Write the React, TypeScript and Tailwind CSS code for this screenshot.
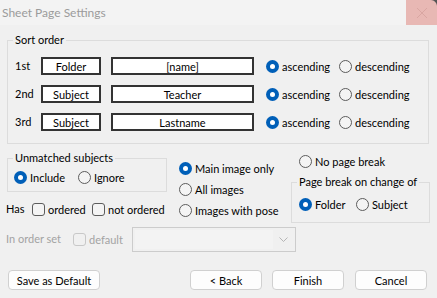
import React from "react";

const font = "font-['Lato','Liberation_Sans',sans-serif]";

function Radio({ checked, label, w }: { checked?: boolean; label: string; w?: string }) {
  return (
    <div className={`flex items-center gap-[3px] ${w ?? ""}`}>
      {checked ? (
        <div className="w-[13px] h-[13px] rounded-full bg-[#005fb8] flex items-center justify-center shrink-0">
          <div className="w-[5px] h-[5px] rounded-full bg-white" />
        </div>
      ) : (
        <div className="w-[13px] h-[13px] rounded-full border border-[#5c5c5c] bg-[#f4f4f4] shrink-0" />
      )}
      <span className="leading-[13px]">{label}</span>
    </div>
  );
}

function Check({ label, disabled }: { label: string; disabled?: boolean }) {
  return (
    <div className={`flex items-center gap-[3px] ${disabled ? "text-[#a3a3a3]" : ""}`}>
      <div
        className={`w-[13px] h-[13px] rounded-[3px] border shrink-0 ${
          disabled ? "border-[#c8c8c8]" : "border-[#5c5c5c] bg-[#f4f4f4]"
        }`}
      />
      <span className="leading-[13px]">{label}</span>
    </div>
  );
}

function SortRow({ n, a, b }: { n: string; a: string; b: string }) {
  return (
    <div className="flex items-center h-[18px] pl-[7px]">
      <span className="w-[26px]">{n}</span>
      <div className="w-[60px] h-[18px] border-2 border-[#333] bg-white flex items-center justify-center leading-none">
        {a}
      </div>
      <div className="ml-[10px] w-[143px] h-[18px] border-2 border-[#333] bg-white flex items-center justify-center leading-none">
        {b}
      </div>
      <div className="ml-[12px] flex">
        <Radio checked label="ascending" w="w-[73px]" />
        <Radio label="descending" />
      </div>
    </div>
  );
}

function Btn({ children, w }: { children: React.ReactNode; w: string }) {
  return (
    <div
      className={`${w} h-[20px] rounded-[4px] border border-[#d0d0d0] bg-[#fdfdfd] flex items-center justify-center leading-none`}
    >
      {children}
    </div>
  );
}

export default function App() {
  return (
    <div className={`w-[437px] h-[298px] bg-[#f0f0f0] text-[11px] text-black flex flex-col overflow-hidden ${font}`}>
      {/* Title bar */}
      <div className="h-[25px] bg-[#f3f3f3] flex items-center shrink-0">
        <span className="flex-1 pl-[2px] text-[12px] text-[#9b9b9b] leading-none">Sheet Page Settings</span>
        <div className="w-[31px] h-[25px] bg-[#e8b8b4] flex items-center justify-center relative">
          <svg width="12" height="12" viewBox="0 0 12 12">
            <path d="M1 1L11 11M11 1L1 11" stroke="#d9a6a2" strokeWidth="1" />
          </svg>
          <svg className="absolute top-0 right-0" width="6" height="6" viewBox="0 0 6 6">
            <path d="M0 0H6V6C6 3 3 0 0 0Z" fill="#555" />
          </svg>
        </div>
      </div>

      {/* Sort order */}
      <fieldset className="ml-[7px] mt-[8px] w-[422px] border border-[#dcdcdc] px-0 pt-0 pb-[12px] m-0 shrink-0">
        <legend className="ml-[5px] px-[2px] leading-[14px]">Sort order</legend>
        <div className="flex flex-col gap-[10px] mt-[10px]">
          <SortRow n="1st" a="Folder" b="[name]" />
          <SortRow n="2nd" a="Subject" b="Teacher" />
          <SortRow n="3rd" a="Subject" b="Lastname" />
        </div>
      </fieldset>

      {/* Middle section */}
      <div className="flex shrink-0">
        {/* left col */}
        <div className="flex flex-col pl-[7px] w-[179px]">
          <fieldset className="mt-[7px] w-[160px] border border-[#dcdcdc] px-0 pt-0 pb-[7px] m-0">
            <legend className="ml-[5px] px-[2px] leading-[14px]">Unmatched subjects</legend>
            <div className="flex mt-[6px] pl-[6px]">
              <Radio checked label="Include" w="w-[64px]" />
              <Radio label="Ignore" />
            </div>
          </fieldset>
          <div className="flex items-center mt-[9px] h-[16px] -ml-[1px]">
            <span className="w-[26px]">Has</span>
            <div className="w-[60px]">
              <Check label="ordered" />
            </div>
            <Check label="not ordered" />
          </div>
        </div>
        {/* middle col */}
        <div className="flex flex-col w-[112px] pt-[14px]">
          <div className="h-[21px] flex items-center">
            <Radio checked label="Main image only" />
          </div>
          <div className="h-[21px] flex items-center">
            <Radio label="All images" />
          </div>
          <div className="h-[21px] flex items-center">
            <Radio label="Images with pose" />
          </div>
        </div>
        {/* right col */}
        <div className="flex flex-col">
          <div className="h-[14px] mt-[10px] flex items-center pl-[8px]">
            <Radio label="No page break" />
          </div>
          <fieldset className="mt-[7px] w-[139px] border border-[#dcdcdc] px-0 pt-0 pb-[11px] m-0">
            <legend className="ml-[5px] px-[2px] leading-[14px]">Page break on change of</legend>
            <div className="flex mt-[9px] pl-[7px]">
              <Radio checked label="Folder" w="w-[57px]" />
              <Radio label="Subject" />
            </div>
          </fieldset>
        </div>
      </div>

      {/* In order set */}
      <div className="flex items-center mt-[4px] h-[25px] pl-[6px] shrink-0">
        <span className="w-[67px] text-[#a3a3a3]">In order set</span>
        <div className="w-[59px]">
          <Check label="default" disabled />
        </div>
        <div className="w-[164px] h-[25px] border border-[#cccccc] bg-[#f0f0f0] flex items-center p-[2px]">
          <div className="flex-1 h-full bg-[#f3f3f3]" />
          <div className="w-[20px] flex items-center justify-center">
            <svg width="9" height="5" viewBox="0 0 9 5">
              <path d="M0.5 0.5L4.5 4.5L8.5 0.5" fill="none" stroke="#b5b5b5" strokeWidth="1" />
            </svg>
          </div>
        </div>
      </div>

      {/* Buttons */}
      <div className="flex items-center mt-[18px] pl-[8px] shrink-0">
        <Btn w="w-[92px]">Save as Default</Btn>
        <div className="ml-[90px] flex gap-[10px]">
          <Btn w="w-[72px]">&lt; Back</Btn>
          <Btn w="w-[72px]">Finish</Btn>
          <div className="ml-[1px]">
            <Btn w="w-[72px]">Cancel</Btn>
          </div>
        </div>
      </div>
    </div>
  );
}
